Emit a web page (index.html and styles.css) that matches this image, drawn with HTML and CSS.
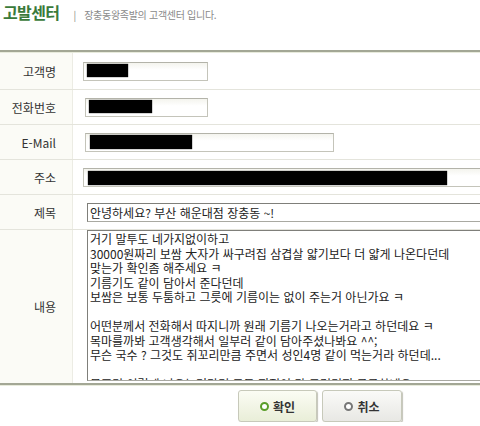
FILE: index.html
```html
<!DOCTYPE html>
<html lang="ko">
<head>
    <meta charset="UTF-8">
    <meta name="viewport" content="width=device-width, initial-scale=1.0">
    <title>고발센터</title>
    <link rel="stylesheet" href="styles.css">
</head>
<body>
    <div class="header">
        <h1>고발센터</h1>
        <span class="bar">|</span>
        <span class="subtitle">장충동왕족발의 고객센터 입니다.</span>
    </div>

    <div class="form">
        <div class="row first">
            <div class="label">고객명</div>
            <div class="field">
                <div class="box box-name"><span class="mask mask-name"></span></div>
            </div>
        </div>
        <div class="row">
            <div class="label">전화번호</div>
            <div class="field">
                <div class="box box-phone"><span class="mask mask-phone"></span></div>
            </div>
        </div>
        <div class="row">
            <div class="label">E-Mail</div>
            <div class="field">
                <div class="box box-mail"><span class="mask mask-mail"></span></div>
            </div>
        </div>
        <div class="row">
            <div class="label">주소</div>
            <div class="field">
                <div class="box box-addr"><span class="mask mask-addr"></span></div>
            </div>
        </div>
        <div class="row">
            <div class="label">제목</div>
            <div class="field">
                <input type="text" class="subject" value="안녕하세요? 부산 해운대점 장충동 ~!" readonly>
            </div>
        </div>
        <div class="row content">
            <div class="label">내용</div>
            <div class="field">
                <textarea class="body-text" wrap="off" readonly>거기 말투도 네가지없이하고
30000원짜리 보쌈 大자가 싸구려집 삼겹살 얇기보다 더 얇게 나온다던데
맞는가 확인좀 해주세요 ㅋ
기름기도 같이 담아서 준다던데
보쌈은 보통 두툼하고 그릇에 기름이는 없이 주는거 아닌가요 ㅋ

어떤분께서 전화해서 따지니까 원래 기름기 나오는거라고 하던데요 ㅋ
목마를까봐 고객생각해서 일부러 같이 담아주셨나봐요 ^^;
무슨 국수 ? 그것도 쥐꼬리만큼 주면서 성인4명 같이 먹는거라 하던데...

무조건 이렇게 나오는거라면 모든 지점이 다 그런건지 궁금하네요</textarea>
            </div>
        </div>
    </div>

    <div class="buttons">
        <button class="btn btn-ok"><span class="ring"></span>확인</button>
        <button class="btn btn-cancel"><span class="ring"></span>취소</button>
    </div>
</body>
</html>
```

FILE: styles.css
```css
body {
    margin: 0;
    background: #fff;
    font-family: "Noto Sans CJK KR", "Noto Sans", sans-serif;
    font-size: 12px;
    color: #333;
    overflow: hidden;
}

/* header */
.header {
    height: 50px;
    display: flex;
    align-items: flex-start;
    padding-left: 3px;
    box-sizing: border-box;
}
.header h1 {
    margin: 0;
    font-size: 16px;
    line-height: 24px;
    font-weight: bold;
    color: #3a7a3a;
    letter-spacing: -0.6px;
}
.bar {
    margin: 8px 0 0 14px;
    font-size: 10px;
    line-height: 14px;
    color: #888;
}
.subtitle {
    margin: 8px 0 0 8px;
    font-size: 10px;
    line-height: 14px;
    color: #8a8a8a;
    letter-spacing: -0.3px;
}

/* form table */
.form {
    border-top: 2px solid #a3a795;
    border-bottom: 2px solid #a3a795;
    box-shadow: inset 0 1px 0 #e8ebdc, 0 1px 0 #e8ebdc;
}
.row {
    display: flex;
    height: 34px;
    border-bottom: 1px solid #e4e4dc;
}
.row.first {
    height: 36px;
    margin-top: 1px;
}
.row.content {
    height: 153px;
    border-bottom: none;
}
.label {
    width: 73px;
    flex: none;
    box-sizing: border-box;
    padding-right: 16px;
    background: #fbfbf6;
    border-right: 1px solid #ececE4;
    display: flex;
    align-items: center;
    justify-content: flex-end;
    color: #333;
}
.field {
    flex: 1;
    min-width: 0;
    overflow: hidden;
    display: flex;
    align-items: center;
    padding-left: 10px;
}
.content .field {
    align-items: flex-start;
    padding-left: 14px;
}

/* redacted input boxes */
.box {
    position: relative;
    flex: none;
    height: 19px;
    box-sizing: border-box;
    border: 1px solid #c4c4ba;
    border-top-color: #b3b3a9;
    background: linear-gradient(#f4f4ee, #fff 40%);
}
.box-name { width: 125px; }
.box-phone { width: 123px; margin-left: 2px; }
.box-mail { width: 249px; margin-left: 2px; }
.box-addr { width: 400px; }
.mask {
    position: absolute;
    background: #000;
    box-shadow: 0 0 1px #000;
}
.mask-name { left: 3px; top: 1px; width: 41px; height: 13px; }
.mask-phone { left: 3px; top: 1px; width: 63px; height: 13px; }
.mask-mail { left: 4px; top: 1px; width: 102px; height: 14px; }
.mask-addr { left: 4px; top: 2px; width: 359px; height: 14px; }

.subject {
    flex: none;
    width: 420px;
    height: 19px;
    box-sizing: border-box;
    margin: 0 0 0 4px;
    padding: 0 2px;
    border: 1px solid #a9a9a2;
    border-top-color: #7f7f7a;
    border-left-color: #7f7f7a;
    font-family: "Noto Sans CJK KR", "Noto Sans", sans-serif;
    font-size: 12px;
    color: #222;
    background: #fff;
    outline: none;
}
.body-text {
    flex: none;
    width: 420px;
    height: 151px;
    box-sizing: border-box;
    margin: 0;
    padding: 1px 2px;
    border: 1px solid #a9a9a2;
    border-top-color: #7f7f7a;
    border-left-color: #7f7f7a;
    font-family: "Noto Sans CJK KR", "Noto Sans", sans-serif;
    font-size: 12px;
    line-height: 14.5px;
    color: #222;
    resize: none;
    overflow: hidden;
    outline: none;
}

/* buttons */
.buttons {
    display: flex;
    gap: 5px;
    padding: 5px 0 0 238px;
}
.btn {
    height: 32px;
    width: 79px;
    display: flex;
    align-items: center;
    justify-content: center;
    gap: 4px;
    border: 1px solid #c7c9ba;
    border-radius: 3px;
    box-shadow: 1px 1px 1px #c2c2b8;
    font-family: "Noto Sans CJK KR", "Noto Sans", sans-serif;
    font-size: 12px;
    font-weight: bold;
    color: #333;
    padding: 0;
}
.btn-ok {
    background: linear-gradient(#fbfcf4, #e9eed8);
}
.btn-cancel {
    width: 80px;
    background: linear-gradient(#fafaf8, #e8e8e4);
}
.ring {
    width: 5px;
    height: 5px;
    border-radius: 50%;
    border: 2px solid #5a9e2a;
    background: #fff;
}
.btn-cancel .ring {
    border-color: #777;
}
```
